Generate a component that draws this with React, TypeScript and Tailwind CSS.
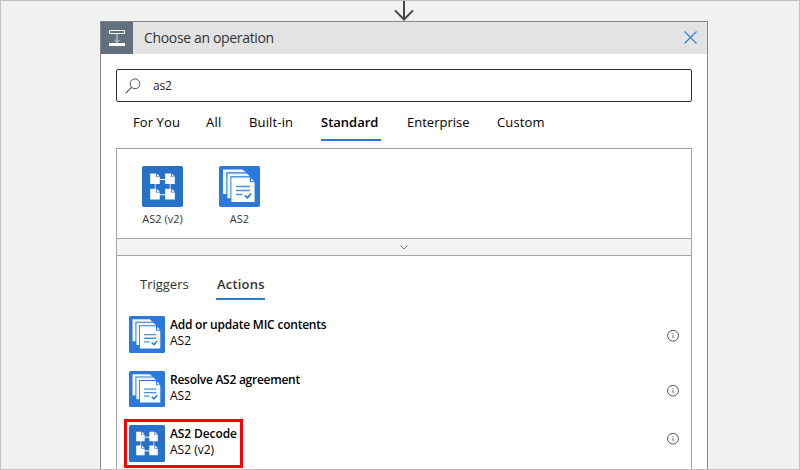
import type { ReactNode } from "react";

const FONT = "font-['Open_Sans','Noto_Sans',sans-serif]";

function FileGlyph({ x, y }: { x: number; y: number }) {
  return (
    <g transform={`translate(${x} ${y})`}>
      <path d="M0 0H5.8V3.6H9.6V10.7H0Z" fill="#fff" />
      <path d="M6.6 0L9.6 3H6.6Z" fill="#fff" />
    </g>
  );
}

function As2V2Icon({ className }: { className: string }) {
  return (
    <svg viewBox="0 0 41 41" preserveAspectRatio="none" className={className}>
      <rect width="41" height="41" rx="1.8" fill="#2871c9" />
      <path d="M17 13.5H24M17 28.7H24" stroke="#fff" strokeWidth="1.1" />
      <path d="M13.3 17V24M28.2 17V24" stroke="#a9c9ee" strokeWidth="1.3" />
      <FileGlyph x={8.2} y={7.4} />
      <FileGlyph x={23.2} y={7.4} />
      <FileGlyph x={8.2} y={22.8} />
      <FileGlyph x={23.2} y={22.8} />
    </svg>
  );
}

function As2Icon({ className }: { className: string }) {
  return (
    <svg viewBox="0 0 41 41" preserveAspectRatio="none" className={className}>
      <rect width="41" height="41" rx="1.8" fill="#2b79dc" />
      <path d="M4 3.6H23.5L26.8 6.3H7.3V28H4Z" fill="#f3f8fe" />
      <path d="M8.4 7.4H27.8L31 10.2H11.4V32.2H8.4Z" fill="#f3f8fe" />
      <path d="M12.4 11.4H30.8V16.3H35.6V36H12.4Z" fill="#fff" />
      <path d="M32 12.2L35.2 15.3H32Z" fill="#fff" />
      <path d="M17 20.6H31M17 24.6H31M17 28.6H23.5" stroke="#4c91e4" strokeWidth="1.5" />
      <path d="M25.8 29.4L28.4 31.8L32 27.6" stroke="#2b79dc" strokeWidth="1.7" fill="none" />
    </svg>
  );
}

function InfoIcon({ className }: { className: string }) {
  return (
    <svg viewBox="0 0 12 12" className={`size-3 ${className}`}>
      <circle cx="6" cy="5.7" r="5.4" fill="none" stroke="#4a4a4a" strokeWidth="0.95" />
      <path d="M6 4.8V8.2M6 3V4" stroke="#666" strokeWidth="1" />
    </svg>
  );
}

function Label({ className = "", children }: { className?: string; children: ReactNode }) {
  return <span className={`block whitespace-nowrap ${className}`}>{children}</span>;
}

function Operation({
  title,
  connector,
  icon,
  className,
  titleClass,
  infoClass,
  highlighted = false,
}: {
  title: string;
  connector: string;
  icon: ReactNode;
  className: string;
  titleClass: string;
  infoClass: string;
  highlighted?: boolean;
}) {
  return (
    <div className={`relative flex h-[37px] shrink-0 items-start px-3 ${className}`}>
      {icon}
      <div className="ml-[5px] mt-px flex-1 text-[12px] leading-4 text-black">
        <Label className={`font-[560] ${titleClass}`}>{title}</Label>
        <Label>{connector}</Label>
      </div>
      <InfoIcon className={infoClass} />
      {highlighted && (
        <div className="absolute left-[7px] -top-[6px] h-[49px] w-[119px] border-3 border-[#fb0007]" />
      )}
    </div>
  );
}

export default function App() {
  return (
    <div className={`flex h-[470px] w-[800px] flex-col items-center overflow-hidden border border-[#c1c1c1] bg-[#f1f1f1] ${FONT}`}>
      <svg viewBox="0 0 20 20" className="ml-[8px] h-5 w-5 shrink-0">
        <path d="M10 0V18.5M1 9.4L10 18.5L19 9.4" fill="none" stroke="#484848" strokeWidth="2" />
      </svg>
      <div className="ml-[8px] flex h-[460px] w-[608px] shrink-0 flex-col border border-[#868686] bg-white">
        <header className="flex h-8 shrink-0 items-center bg-[#e3e3e3]">
          <div className="flex size-8 items-center justify-center bg-[#626f7f]">
            <svg viewBox="0 0 16 16" className="size-4">
              <path d="M0.5 0.5H15.5V3.5H0.5Z" fill="none" stroke="#fff" />
              <path d="M8 4V12M5.4 9.8L8 12.4L10.6 9.8" fill="none" stroke="#dce0e4" />
              <path d="M0 13H16V16H0Z" fill="#fff" />
            </svg>
          </div>
          <Label className="ml-[11px] text-[14px] leading-5 tracking-[-0.34px] text-[#333]">Choose an operation</Label>
          <svg viewBox="0 0 13 13" className="mb-[2px] ml-auto mr-[10px] size-[13px]">
            <path d="M0.5 0.5L12.5 12.5M12.5 0.5L0.5 12.5" stroke="#2b7fd8" strokeWidth="1.1" />
          </svg>
        </header>

        <div className="mx-[15px] mt-[15px] flex h-[33px] shrink-0 items-center rounded-[2px] border border-[#333] bg-white">
          <svg viewBox="0 0 16 16" className="ml-[8px] size-4">
            <circle cx="10" cy="5.8" r="4.9" fill="none" stroke="#555" />
            <path d="M6.5 9.3L0.7 15.1" stroke="#555" strokeWidth="1.2" />
          </svg>
          <Label className="ml-[12px] text-[12px] leading-4 tracking-[-0.2px] text-[#222]">as2</Label>
        </div>

        <nav className="ml-[32px] mt-[9px] flex h-[30px] shrink-0 text-[13px] leading-[22px] text-black">
          <div className="w-[73px]"><Label className="tracking-[0.1px]">For You</Label></div>
          <div className="w-[43px]"><Label className="tracking-[0.3px]">All</Label></div>
          <div className="w-[72px]"><Label className="tracking-[0.15px]">Built-in</Label></div>
          <div className="mr-[26px] w-[60px] border-b-2 border-[#2b79d3] font-[560]"><Label>Standard</Label></div>
          <div className="w-[90px]"><Label>Enterprise</Label></div>
          <div><Label className="tracking-[0.15px]">Custom</Label></div>
        </nav>

        <section className="mx-[15px] mt-[7px] flex h-[91px] shrink-0 border border-[#a6a6a6] pl-[25px] pt-[17px] text-[11px] leading-4 text-[#333]">
          <div className="flex w-[41px] flex-col items-center">
            <As2V2Icon className="size-[41px]" />
            <Label className="mt-1">AS2 (v2)</Label>
          </div>
          <div className="ml-9 flex w-[41px] flex-col items-center">
            <As2Icon className="size-[41px]" />
            <Label className="mt-1">AS2</Label>
          </div>
        </section>
        <div className="mx-[15px] flex h-4 shrink-0 items-center justify-center border-x border-[#a6a6a6] bg-[#f3f3f3]">
          <svg viewBox="0 0 8 5" className="h-[5px] w-2">
            <path d="M0.4 0.5L4 4.1L7.6 0.5" fill="none" stroke="#777" />
          </svg>
        </div>

        <section className="mx-[15px] flex h-[230px] shrink-0 flex-col border border-[#a6a6a6]">
          <nav className="ml-[23px] mt-[17px] flex h-[27px] shrink-0 text-[13px] leading-[22px] text-[#333]">
            <div className="w-[76px]"><Label>Triggers</Label></div>
            <div className="w-[49px] border-b-2 border-[#2b79d3] font-[560]"><Label className="ml-px tracking-[0.2px]">Actions</Label></div>
          </nav>
          <Operation className="mt-4" title="Add or update MIC contents" connector="AS2" icon={<As2Icon className="h-[37px] w-9" />} titleClass="tracking-[-0.22px]" infoClass="mt-[14px]" />
          <Operation className="mt-[18px]" title="Resolve AS2 agreement" connector="AS2" icon={<As2Icon className="h-9 w-9" />} titleClass="tracking-[-0.26px]" infoClass="mt-[14px]" />
          <Operation className="mt-[17px]" title="AS2 Decode" connector="AS2 (v2)" icon={<As2V2Icon className="h-[37px] w-9" />} titleClass="tracking-[-0.1px]" infoClass="mt-[8px]" highlighted />
        </section>
      </div>
    </div>
  );
}
